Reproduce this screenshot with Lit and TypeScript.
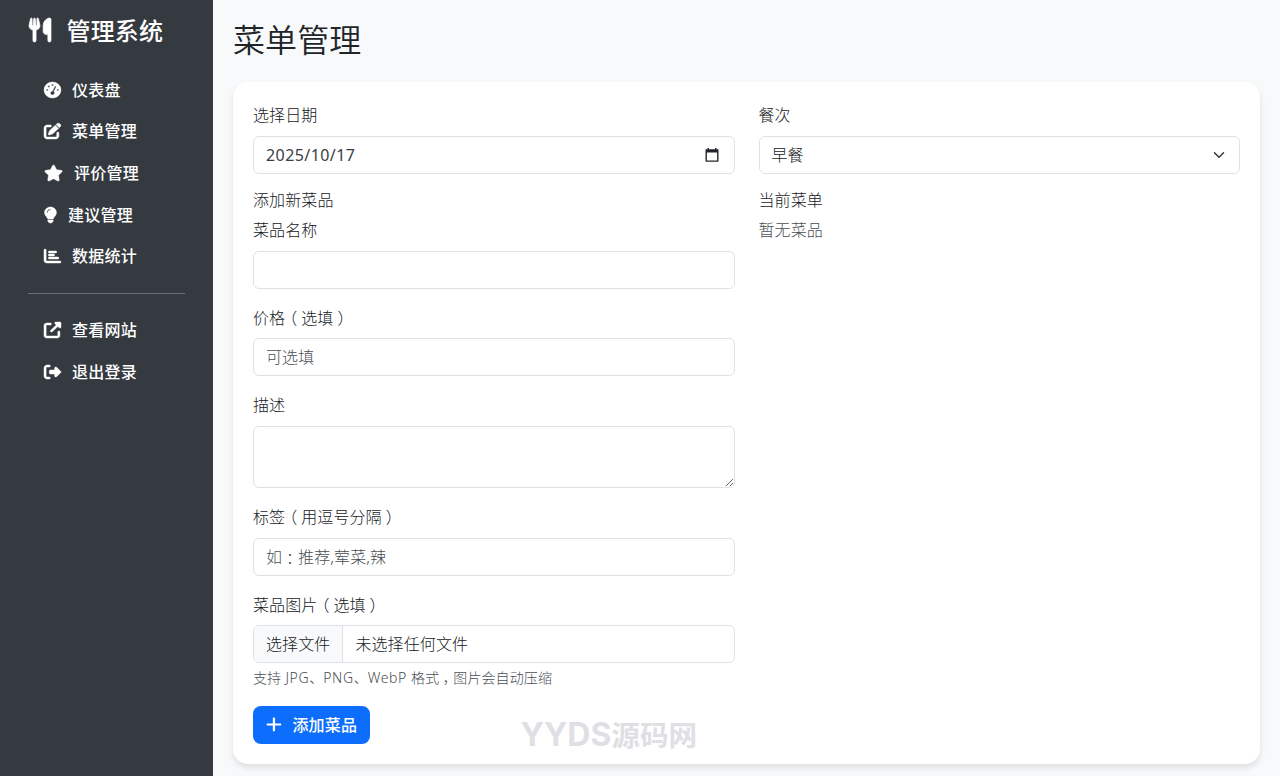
import { LitElement, html, css, svg } from "lit";
import { customElement, property } from "lit/decorators.js";

type Glyph = { w: number; d: string };

const GLYPHS: Record<string, Glyph> = {
  utensils: {
    w: 448,
    d: "M416 0C400 0 288 32 288 176V288c0 35.3 28.7 64 64 64h32V480c0 17.7 14.3 32 32 32s32-14.3 32-32V352 240 32c0-17.7-14.3-32-32-32zM64 16C64 7.8 57.9 1 49.7 .1S34.2 4.6 32.4 12.5L2.1 148.8C.7 155.1 0 161.5 0 167.9c0 45.9 35.1 83.6 80 87.7V480c0 17.7 14.3 32 32 32s32-14.3 32-32V255.6c44.9-4.1 80-41.8 80-87.7c0-6.4-.7-12.8-2.1-19.1L191.6 12.5c-1.8-8-9.3-13.3-17.4-12.4S160 7.8 160 16V150.2c0 5.4-4.4 9.8-9.8 9.8c-5.1 0-9.3-3.9-9.8-9L127.9 14.6C127.2 6.3 120.3 0 112 0s-15.2 6.3-15.9 14.6L83.7 151c-.5 5.1-4.7 9-9.8 9c-5.4 0-9.8-4.4-9.8-9.8V16z",
  },
  gauge: {
    w: 512,
    d: "M0 256a256 256 0 1 1 512 0A256 256 0 1 1 0 256zM288 96a32 32 0 1 0 -64 0 32 32 0 1 0 64 0zM256 416c35.3 0 64-28.7 64-64c0-17.4-6.9-33.1-18.1-44.6L366 161.7c5.3-12.1-.2-26.3-12.3-31.6s-26.3 .2-31.6 12.3L257.9 288c-.6 0-1.3 0-1.9 0c-35.3 0-64 28.7-64 64s28.7 64 64 64zM176 144a32 32 0 1 0 -64 0 32 32 0 1 0 64 0zM96 288a32 32 0 1 0 0-64 32 32 0 1 0 0 64zm352-32a32 32 0 1 0 -64 0 32 32 0 1 0 64 0z",
  },
  edit: {
    w: 512,
    d: "M471.6 21.7c-21.9-21.9-57.3-21.9-79.2 0L362.3 51.7l97.9 97.9 30.1-30.1c21.9-21.9 21.9-57.3 0-79.2L471.6 21.7zm-299.2 220c-6.1 6.1-10.8 13.6-13.5 21.9l-29.6 88.8c-2.9 8.6-.6 18.1 5.8 24.6s15.9 8.7 24.6 5.8l88.8-29.6c8.2-2.7 15.7-7.4 21.9-13.5L437.7 172.3 339.7 74.3 172.4 241.7zM96 64C43 64 0 107 0 160V416c0 53 43 96 96 96H352c53 0 96-43 96-96V320c0-17.7-14.3-32-32-32s-32 14.3-32 32v96c0 17.7-14.3 32-32 32H96c-17.7 0-32-14.3-32-32V160c0-17.7 14.3-32 32-32h96c17.7 0 32-14.3 32-32s-14.3-32-32-32H96z",
  },
  star: {
    w: 576,
    d: "M316.9 18C311.6 7 300.4 0 288.1 0s-23.4 7-28.8 18L195 150.3 51.4 171.5c-12 1.8-22 10.2-25.7 21.7s-.7 24.2 7.9 32.7L137.8 329 113.2 474.7c-2 12 3 24.2 12.9 31.3s23 8 33.8 2.3l128.3-68.5 128.3 68.5c10.8 5.7 23.9 4.9 33.8-2.3s14.9-19.3 12.9-31.3L438.5 329 542.7 225.9c8.6-8.5 11.7-21.2 7.9-32.7s-13.7-19.9-25.7-21.7L381.2 150.3 316.9 18z",
  },
  bulb: {
    w: 384,
    d: "M272 384c9.6-31.9 29.5-59.1 49.2-86.2l0 0c5.2-7.1 10.4-14.2 15.4-21.4c19.8-28.5 31.4-63 31.4-100.3C368 78.8 289.2 0 192 0S16 78.8 16 176c0 37.3 11.6 71.9 31.4 100.3c5 7.2 10.2 14.3 15.4 21.4l0 0c19.8 27.1 39.7 54.4 49.2 86.2H272zM192 512c44.2 0 80-35.8 80-80V416H112v16c0 44.2 35.8 80 80 80zM112 176c0 8.8-7.2 16-16 16s-16-7.2-16-16c0-61.9 50.1-112 112-112c8.8 0 16 7.2 16 16s-7.2 16-16 16c-44.2 0-80 35.8-80 80z",
  },
  chart: {
    w: 512,
    d: "M32 32c17.7 0 32 14.3 32 32V400c0 8.8 7.2 16 16 16H480c17.7 0 32 14.3 32 32s-14.3 32-32 32H80c-44.2 0-80-35.8-80-80V64C0 46.3 14.3 32 32 32zm96 96c0-17.7 14.3-32 32-32l192 0c17.7 0 32 14.3 32 32s-14.3 32-32 32H160c-17.7 0-32-14.3-32-32zm32 64H288c17.7 0 32 14.3 32 32s-14.3 32-32 32H160c-17.7 0-32-14.3-32-32s14.3-32 32-32zm0 96H416c17.7 0 32 14.3 32 32s-14.3 32-32 32H160c-17.7 0-32-14.3-32-32s14.3-32 32-32z",
  },
  external: {
    w: 512,
    d: "M352 0c-12.9 0-24.6 7.8-29.6 19.8s-2.2 25.7 6.9 34.9L370.7 96 201.4 265.4c-12.5 12.5-12.5 32.8 0 45.3s32.8 12.5 45.3 0L416 141.3l41.4 41.4c9.2 9.2 22.9 11.9 34.9 6.9s19.8-16.6 19.8-29.6V32c0-17.7-14.3-32-32-32H352zM80 32C35.8 32 0 67.8 0 112V432c0 44.2 35.8 80 80 80H400c44.2 0 80-35.8 80-80V320c0-17.7-14.3-32-32-32s-32 14.3-32 32V432c0 8.8-7.2 16-16 16H80c-8.8 0-16-7.2-16-16V112c0-8.8 7.2-16 16-16H192c17.7 0 32-14.3 32-32s-14.3-32-32-32H80z",
  },
  logout: {
    w: 512,
    d: "M377.9 105.9L500.7 228.7c7.2 7.2 11.3 17.1 11.3 27.3s-4.1 20.1-11.3 27.3L377.9 406.1c-6.4 6.4-15 9.9-24 9.9c-18.7 0-33.9-15.2-33.9-33.9l0-62.1-128 0c-17.7 0-32-14.3-32-32l0-64c0-17.7 14.3-32 32-32l128 0 0-62.1c0-18.7 15.2-33.9 33.9-33.9c9 0 17.6 3.6 24 9.9zM160 96L96 96c-17.7 0-32 14.3-32 32l0 256c0 17.7 14.3 32 32 32l64 0c17.7 0 32 14.3 32 32s-14.3 32-32 32l-64 0c-53 0-96-43-96-96L0 128C0 75 43 32 96 32l64 0c17.7 0 32 14.3 32 32s-14.3 32-32 32z",
  },
  plus: {
    w: 448,
    d: "M256 80c0-17.7-14.3-32-32-32s-32 14.3-32 32V224H48c-17.7 0-32 14.3-32 32s14.3 32 32 32H192V432c0 17.7 14.3 32 32 32s32-14.3 32-32V288H400c17.7 0 32-14.3 32-32s-14.3-32-32-32H256V80z",
  },
};

@customElement("solid-icon")
class SolidIcon extends LitElement {
  @property() name = "star";
  @property({ type: Number }) size = 16;

  static styles = css`
    :host {
      display: inline-flex;
      flex: none;
    }
    svg {
      display: block;
      overflow: visible;
    }
    path {
      fill: currentColor;
      stroke: currentColor;
      stroke-width: var(--icon-weight, 14);
    }
  `;

  render() {
    const g = GLYPHS[this.name];
    return html`<svg
      width=${(g.w / 512) * this.size + 1}
      height=${this.size}
      viewBox="0 0 ${g.w} 512"
      preserveAspectRatio="none"
    >
      ${svg`<path d=${g.d}></path>`}
    </svg>`;
  }
}

@customElement("app-root")
class AppRoot extends LitElement {
  static styles = css`
    :host {
      display: block;
      font-family: "Noto Sans", "Noto Sans CJK SC", sans-serif;
      font-weight: 300;
      font-size: 16px;
      letter-spacing: 0.1px;
      color: #16191d;
    }
    * {
      box-sizing: border-box;
    }
    .shell {
      display: grid;
      grid-template-columns: 213px 1fr;
      height: 776px;
      overflow: hidden;
      background: #f8f9fa;
      position: relative;
    }
    .side {
      background: #343a40;
      color: #fff;
      font-weight: 500;
      padding: 12px 28px;
      letter-spacing: 0.25px;
    }
    .brand {
      display: flex;
      align-items: center;
      gap: 16px;
      height: 36px;
      font-size: 24px;
      line-height: 39px;
      margin-bottom: 21.4px;
      padding-left: 0.6px;
      letter-spacing: 0.1px;
    }
    .item {
      display: flex;
      align-items: center;
      gap: 11.5px;
      height: 41.6px;
      line-height: 26.6px;
      padding-left: 15.5px;
      white-space: nowrap;
    }
    .item solid-icon {
      margin-bottom: 0.8px;
    }
    .rule {
      height: 1px;
      background: #6b7074;
      margin: 15.6px 0 16px;
    }
    .main {
      padding: 20px 20px 0;
    }
    h2 {
      margin: 0 0 20px;
      height: 42px;
      line-height: 40px;
      font-size: 32px;
      font-weight: 350;
      color: #212529;
    }
    .card {
      background: #fff;
      border-radius: 15px;
      height: 682px;
      padding: 20px;
      box-shadow: 0 4px 6px rgba(0, 0, 0, 0.1);
      display: grid;
      grid-template-columns: 1fr 1fr;
      column-gap: 24px;
      grid-template-rows: 88px 1fr;
    }
    .label {
      height: 25.6px;
      line-height: 26px;
      margin-bottom: 8px;
      white-space: nowrap;
    }
    .heading {
      height: 19.2px;
      line-height: 20px;
      margin-bottom: 8px;
    }
    .control {
      display: flex;
      align-items: center;
      width: 100%;
      height: 38px;
      border: 1px solid #dee2e6;
      border-radius: 6px;
      padding: 0 12px;
      background: #fff;
      line-height: 24px;
      overflow: hidden;
    }
    .control.split {
      justify-content: space-between;
    }
    .date {
      font-weight: 400;
      letter-spacing: 0.42px;
      color: #3a3e42;
    }
    .cal {
      margin-right: 3px;
    }
    .field {
      margin-bottom: 16px;
    }
    .placeholder {
      color: #4a4f54;
    }
    textarea {
      display: block;
      width: 100%;
      height: 62px;
      border: 1px solid #dee2e6;
      border-radius: 6px;
      resize: vertical;
      outline: none;
      background: #fff;
    }
    .pick {
      background: #f8f9fa;
      border-right: 1px solid #dee2e6;
      height: 100%;
      line-height: 36px;
      padding: 0 12px;
      margin: 0 12px 0 -12px;
    }
    .hint {
      margin-top: 4px;
      height: 22.4px;
      line-height: 21px;
      font-size: 14px;
      color: #4a4f54;
      white-space: nowrap;
    }
    .latin {
      letter-spacing: 0.6px;
    }
    .punct {
      display: inline-block;
      width: 1em;
      line-height: 1;
      text-align: center;
      letter-spacing: 0;
      font-family: "Noto Sans CJK SC", sans-serif;
      font-feature-settings: "halt" 1;
    }
    .empty {
      color: #4a4f54;
      line-height: 26px;
    }
    .btn {
      display: inline-flex;
      align-items: center;
      gap: 11px;
      height: 38px;
      width: 117px;
      padding: 0 0 0 12.5px;
      border: 0;
      border-radius: 8px;
      background: #0d6efd;
      color: #fff;
      font: inherit;
      font-weight: 500;
      letter-spacing: 0.2px;
      line-height: 24px;
      white-space: nowrap;
      --icon-weight: 0;
    }
    .mark {
      position: absolute;
      left: 520.5px;
      top: 714px;
      font: 700 28.6px/40px "Noto Sans CJK SC", sans-serif;
      letter-spacing: 0;
      color: #dfe0e4;
      white-space: nowrap;
    }
    .mark span {
      font-family: Inter, sans-serif;
      font-size: 32px;
    }
  `;

  private nav = [
    ["gauge", "仪表盘"],
    ["edit", "菜单管理"],
    ["star", "评价管理"],
    ["bulb", "建议管理"],
    ["chart", "数据统计"],
  ];

  private links = [
    ["external", "查看网站"],
    ["logout", "退出登录"],
  ];

  private item([icon, text]: string[]) {
    return html`<div class="item"><solid-icon name=${icon}></solid-icon><span>${text}</span></div>`;
  }

  private paren(head: string, inner: string) {
    return html`${head}<span class="punct">（</span>${inner}<span class="punct">）</span>`;
  }

  render() {
    return html`
      <div class="shell">
        <nav class="side">
          <div class="brand"><solid-icon name="utensils" size="24"></solid-icon><span>管理系统</span></div>
          ${this.nav.map((n) => this.item(n))}
          <div class="rule"></div>
          ${this.links.map((n) => this.item(n))}
        </nav>
        <main class="main">
          <h2>菜单管理</h2>
          <section class="card">
            <div>
              <div class="label">选择日期</div>
              <div class="control split">
                <span class="date">2025/10/17</span>
                <svg class="cal" width="14" height="14" viewBox="0 0 14 14">
                  <path fill="#212529" fill-rule="evenodd" d="M2.5 0H4v1.2h6V0h1.5v1.2H13q.5 0 .5 1V13q0 .8-.5.8H1q-.5 0-.5-.8V2.200q0-1 .5-1h1.500zM1.900 4.500v8h10.200v-8z"></path>
                </svg>
              </div>
            </div>
            <div>
              <div class="label">餐次</div>
              <div class="control split">
                <span>早餐</span>
                <svg width="16" height="12" viewBox="0 0 16 16">
                  <path fill="none" stroke="#343a40" stroke-linecap="round" stroke-linejoin="round" stroke-width="2" d="m2 5 6 6 6-6"></path>
                </svg>
              </div>
            </div>
            <div>
              <div class="heading">添加新菜品</div>
              <div class="field">
                <div class="label">菜品名称</div>
                <div class="control"></div>
              </div>
              <div class="field">
                <div class="label">${this.paren("价格", "选填")}</div>
                <div class="control placeholder">可选填</div>
              </div>
              <div class="field">
                <div class="label">描述</div>
                <textarea></textarea>
              </div>
              <div class="field">
                <div class="label">${this.paren("标签", "用逗号分隔")}</div>
                <div class="control placeholder">如<span class="punct">：</span>推荐,荤菜,辣</div>
              </div>
              <div class="field">
                <div class="label">${this.paren("菜品图片", "选填")}</div>
                <div class="control"><span class="pick">选择文件</span><span>未选择任何文件</span></div>
                <div class="hint">支持<span class="latin"> JPG</span>、<span class="latin">PNG</span>、<span class="latin">WebP </span>格式<span class="punct">，</span>图片会自动压缩</div>
              </div>
              <button class="btn"><solid-icon name="plus" size="17"></solid-icon><span>添加菜品</span></button>
            </div>
            <div>
              <div class="heading">当前菜单</div>
              <div class="empty">暂无菜品</div>
            </div>
          </section>
        </main>
        <div class="mark"><span>YYDS</span>源码网</div>
      </div>
    `;
  }
}
